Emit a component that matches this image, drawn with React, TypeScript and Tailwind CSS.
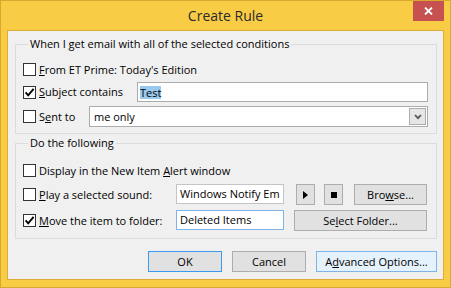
import React from 'react';

type CheckProps = { checked?: boolean };

function Check({ checked }: CheckProps) {
  return (
    <span className="flex h-[13px] w-[13px] shrink-0 items-center justify-center border border-[#333333] bg-white">
      {checked && (
        <svg width="11" height="11" viewBox="0 0 11 11">
          <path d="M1.6 5.4 L4.2 8.3 L9.6 1.8" fill="none" stroke="#000" strokeWidth="1.9" />
        </svg>
      )}
    </span>
  );
}

function Btn({ children, className }: { children: React.ReactNode; className: string }) {
  return (
    <div className={`flex h-[21px] items-center justify-center border ${className}`}>
      {children}
    </div>
  );
}

export default function App() {
  return (
    <div className="flex h-[288px] w-[451px] flex-col border border-[#d8a92f] bg-[#f9cc45] font-['Open_Sans','Noto_Sans',sans-serif] text-[11px] leading-[14px] text-black">
      {/* title bar */}
      <div className="grid h-[29px] shrink-0 grid-cols-[1fr_auto_1fr]">
        <div />
        <div className="self-center text-[14px] leading-[18px] text-[#2a2a2a]">Create Rule</div>
        <div className="flex justify-end pr-[6px]">
          <div className="flex h-[20px] w-[31px] items-center justify-center bg-[#c75050]">
            <svg width="9" height="8" viewBox="0 0 9 8">
              <path d="M1 0.5 L8 7.5 M8 0.5 L1 7.5" stroke="#fff" strokeWidth="1.8" />
            </svg>
          </div>
        </div>
      </div>

      {/* client area */}
      <div className="mx-[6px] flex h-[250px] flex-col border border-[#dcae35] bg-[#f0f0f0] pl-[7px] pr-[6px] pt-[6px]">
        <fieldset className="border border-[#dcdcdc] pb-[6px] pl-[7px] pr-[8px]">
          <legend className="ml-[5px] px-[2px] leading-[14px]">When I get email with all of the selected conditions</legend>
          <div className="mt-[11px] flex h-[15px] items-center gap-[3px]">
            <Check />
            <span><u>F</u>rom ET Prime: Today's Edition</span>
          </div>
          <div className="mt-[5px] flex h-[20px] items-center">
            <div className="flex w-[114px] items-center gap-[3px]">
              <Check checked />
              <span><u>S</u>ubject contains</span>
            </div>
            <div className="flex h-[20px] w-[291px] items-center border border-[#acacac] bg-white pl-[2px]">
              <span className="bg-[#99c9ef] leading-[13px]">Test</span>
            </div>
          </div>
          <div className="mt-[4px] flex h-[21px] items-center">
            <div className="flex w-[66px] items-center gap-[3px]">
              <Check />
              <span>S<u>e</u>nt to</span>
            </div>
            <div className="flex h-[21px] w-[339px] items-center justify-between border border-[#acacac] bg-white pl-[4px] pr-[1px]">
              <span>me only</span>
              <div className="flex h-[17px] w-[17px] items-center justify-center border border-[#acacac] bg-[#e6e6e6]">
                <svg width="8" height="6" viewBox="0 0 8 6">
                  <path d="M1 1 L4 4.2 L7 1" fill="none" stroke="#555" strokeWidth="1.8" />
                </svg>
              </div>
            </div>
          </div>
        </fieldset>

        <fieldset className="mt-[2px] border border-[#dcdcdc] pb-[7px] pl-[7px] pr-[8px]">
          <legend className="ml-[5px] px-[2px] leading-[14px]">Do the following</legend>
          <div className="mt-[13px] flex h-[15px] items-center gap-[3px]">
            <Check />
            <span>Display in the New Item <u>A</u>lert window</span>
          </div>
          <div className="mt-[6px] flex h-[21px] items-start">
            <div className="flex h-[21px] w-[153px] items-center gap-[3px]">
              <Check />
              <span><u>P</u>lay a selected sound:</span>
            </div>
            <div className="flex h-[20px] w-[108px] items-center overflow-hidden whitespace-nowrap border border-[#c4c4c4] bg-white pl-[3px]">
              Windows Notify Em
            </div>
            <Btn className="ml-[12px] h-[20px] w-[19px] border-[#adadad] bg-[#e1e1e1]">
              <svg width="5" height="8" viewBox="0 0 5 8">
                <path d="M0 0 L5 4 L0 8 Z" fill="#000" />
              </svg>
            </Btn>
            <Btn className="ml-[9px] h-[20px] w-[19px] border-[#adadad] bg-[#e1e1e1]">
              <span className="block h-[6px] w-[6px] bg-black" />
            </Btn>
            <Btn className="ml-[11px] w-[73px] border-[#adadad] bg-[#e1e1e1]">
              <span>Bro<u>w</u>se...</span>
            </Btn>
          </div>
          <div className="mt-[5px] flex h-[21px] items-start">
            <div className="flex h-[21px] w-[153px] items-center gap-[3px]">
              <Check checked />
              <span><u>M</u>ove the item to folder:</span>
            </div>
            <div className="flex h-[20px] w-[108px] items-center border border-[#7eb4ea] bg-white pl-[3px]">
              Deleted Items
            </div>
            <Btn className="ml-[10px] w-[133px] border-[#adadad] bg-[#e1e1e1]">
              <span>Se<u>l</u>ect Folder...</span>
            </Btn>
          </div>
        </fieldset>

        <div className="mt-[12px] flex justify-end gap-[10px]">
          <Btn className="w-[74px] border-[#3c9bf0] bg-[#e1e1e1]">OK</Btn>
          <Btn className="w-[74px] border-[#adadad] bg-[#e1e1e1]">Cancel</Btn>
          <Btn className="w-[121px] border-[#7eb4ea] bg-[#e5f1fb]">
            <span>A<u>d</u>vanced Options...</span>
          </Btn>
        </div>
      </div>
    </div>
  );
}
